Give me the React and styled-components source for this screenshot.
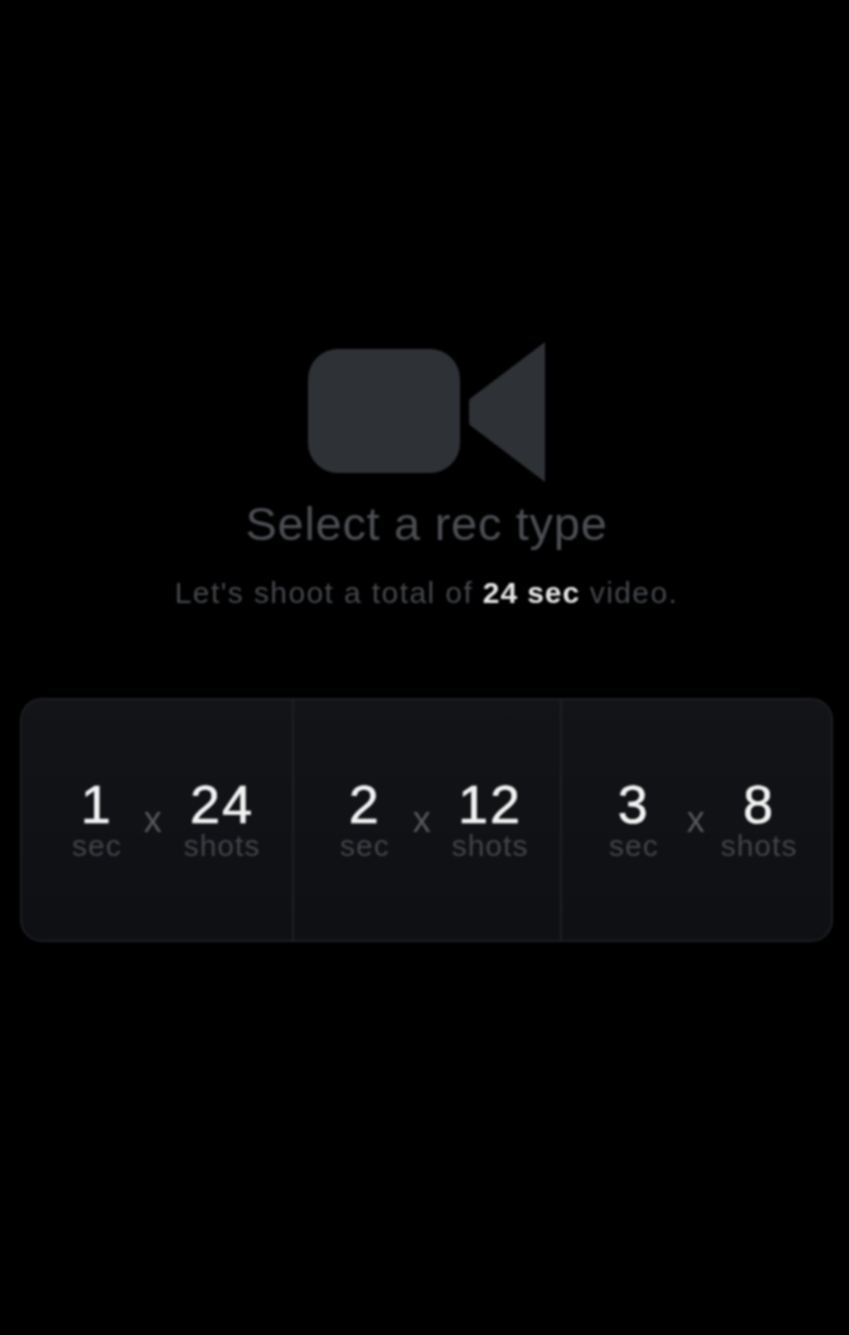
import React from "react";
import styled, { createGlobalStyle } from "styled-components";

const GlobalStyle = createGlobalStyle`
  html, body {
    margin: 0;
    padding: 0;
    background: #000;
  }
`;

const Screen = styled.div`
  width: 849px;
  height: 1335px;
  box-sizing: border-box;
  padding: 342px 0 0 4px;
  display: flex;
  flex-direction: column;
  align-items: center;
  background: #000;
  font-family: "Liberation Sans", Arial, sans-serif;
  filter: blur(0.9px);
  overflow: hidden;
`;

const CameraIcon = styled.svg`
  display: block;
  width: 238px;
  height: 140px;
  margin-left: 1px;
  fill: #2e3136;
`;

const Title = styled.h1`
  margin: 19px 0 0;
  font-size: 47px;
  line-height: 46px;
  font-weight: 400;
  letter-spacing: 0.7px;
  color: #4b4e53;
`;

const Subtitle = styled.p`
  margin: 30px 0 0;
  font-size: 30px;
  line-height: 32px;
  letter-spacing: 1.4px;
  color: #45484d;

  strong {
    font-weight: 700;
    letter-spacing: 0.9px;
    color: #e6e6e6;
  }
`;

const Picker = styled.div`
  width: 813px;
  height: 244px;
  box-sizing: border-box;
  margin-top: 89px;
  display: grid;
  grid-template-columns: 270px 268px 1fr;
  border: 2px solid #1e1f23;
  border-radius: 22px;
  background: linear-gradient(#131418, #0f1013);
  overflow: hidden;
`;

const Option = styled.div`
  display: flex;
  align-items: center;
  gap: 22px;
  padding-left: ${(p) => p.$inset}px;
  border-left: ${(p) => (p.$first ? "none" : "2px solid #1e1f23")};
`;

const Stat = styled.div`
  display: flex;
  flex-direction: column;
  align-items: center;
`;

const Value = styled.span`
  font-size: 54px;
  line-height: 52px;
  letter-spacing: 2px;
  color: #f2f2f2;
  -webkit-text-stroke: 0.6px #f2f2f2;
`;

const Unit = styled.span`
  font-size: 30px;
  line-height: 32px;
  letter-spacing: 1px;
  color: #414449;
`;

const Times = styled.span`
  margin: 0 ${(p) => -p.$shift}px 0 ${(p) => p.$shift}px;
  font-size: 36px;
  line-height: 32px;
  color: #55585c;
`;

const options = [
  { sec: 1, shots: 24, inset: 50, shift: 0 },
  { sec: 2, shots: 12, inset: 46, shift: 1 },
  { sec: 3, shots: 8, inset: 47, shift: 6 },
];

function App() {
  return (
    <>
      <GlobalStyle />
      <Screen>
        <CameraIcon viewBox="0 0 238 140">
          <rect x="0" y="7" width="152" height="124" rx="30" />
          <path d="M237 0 V140 L163 84 Q161 83 161 80 V60 Q161 57 163 56 Z" />
        </CameraIcon>
        <Title>Select a rec type</Title>
        <Subtitle>
          Let's shoot a total of <strong>24 sec</strong> video.
        </Subtitle>
        <Picker>
          {options.map((option, i) => (
            <Option key={option.sec} $inset={option.inset} $first={i === 0}>
              <Stat>
                <Value>{option.sec}</Value>
                <Unit>sec</Unit>
              </Stat>
              <Times $shift={option.shift}>x</Times>
              <Stat>
                <Value>{option.shots}</Value>
                <Unit>shots</Unit>
              </Stat>
            </Option>
          ))}
        </Picker>
      </Screen>
    </>
  );
}

export default App;
